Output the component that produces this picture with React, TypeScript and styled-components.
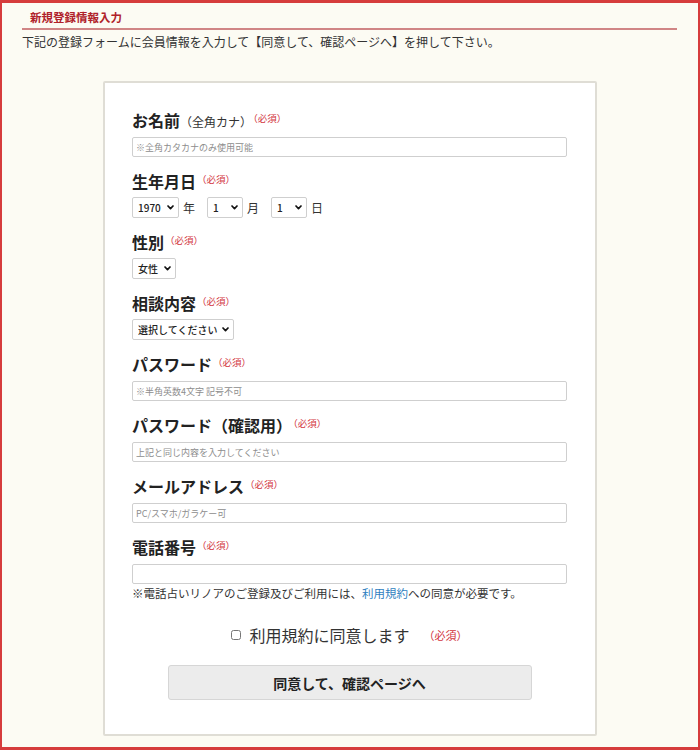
import React from "react";
import styled, { createGlobalStyle } from "styled-components";

const Global = createGlobalStyle`
  html, body { margin: 0; padding: 0; }
  body { font-family: "Noto Sans CJK JP", "Noto Sans", sans-serif; color: #333; }
  * { box-sizing: border-box; }
`;

const Page = styled.div`
  width: 700px;
  height: 750px;
  border: 2px solid #d63c3c;
  border-top-width: 3px;
  border-bottom-width: 3px;
  background: #fcfbf3;
  display: flex;
  flex-direction: column;
  overflow: hidden;
`;

const Header = styled.div`
  margin: 0 21px 0 20px;
`;

const Title = styled.h1`
  margin: 0;
  padding: 6px 8px 3px;
  font-size: 11.5px;
  line-height: 16px;
  font-weight: 700;
  color: #b0222a;
  border-bottom: 2px solid #d08585;
`;

const Intro = styled.p`
  margin: 3px 0 0;
  font-size: 12px;
  line-height: 18px;
  color: #333;
`;

const Card = styled.div`
  align-self: center;
  width: 494px;
  margin-top: 30px;
  background: #fff;
  border: 2px solid #dfddd5;
  border-radius: 2px;
  padding: 28px 28px 34px 27px;
  display: flex;
  flex-direction: column;
`;

const FieldGroup = styled.div<{ $last?: boolean; $select?: boolean }>`
  display: flex;
  flex-direction: column;
  gap: ${(p) => (p.$select ? "3px" : "4px")};
  margin-bottom: ${(p) => (p.$last ? "0" : "15px")};
`;

const Label = styled.div`
  height: 22px;
  padding-bottom: 4px;
  font-size: 16px;
  line-height: 18px;
  font-weight: 700;
  color: #222;
  white-space: nowrap;
`;

const Sub = styled.span`
  font-size: 12px;
  font-weight: 400;
  color: #333;
`;

const Req = styled.span`
  font-size: 9.5px;
  line-height: 0;
  font-weight: 400;
  color: #d2343c;
  vertical-align: 5px;
  margin-left: 1px;
`;

const TextInput = styled.input`
  display: block;
  width: 100%;
  height: 20px;
  border: 1px solid #cfcfcf;
  border-radius: 2px;
  padding: 0 3px;
  font-family: "Noto Sans CJK JP", sans-serif;
  font-size: 9px;
  color: #333;
  background: #fff;
  outline: none;
  &::placeholder { color: #8d8d8d; }
`;

const Row = styled.div`
  display: flex;
  align-items: center;
  height: 21px;
`;

const SelectWrap = styled.span`
  position: relative;
  display: inline-flex;
`;

const Select = styled.select<{ $w: number }>`
  appearance: none;
  -webkit-appearance: none;
  width: ${(p) => p.$w}px;
  height: 21px;
  border: 1px solid #cfcfcf;
  border-radius: 2px;
  background: #fff;
  font-family: "Noto Sans CJK JP", sans-serif;
  font-size: 10px;
  font-weight: 500;
  color: #222;
  padding: 0 14px 0 5px;
  outline: none;
`;

const Chevron = styled.svg`
  position: absolute;
  right: 5px;
  top: 8px;
  width: 7px;
  height: 5px;
  pointer-events: none;
`;

const Unit = styled.span`
  font-size: 12px;
  color: #333;
  margin: 0 12px 0 4px;
`;

const Note = styled.p`
  margin: 1px 0 0;
  font-size: 11.5px;
  line-height: 16px;
  color: #333;
  white-space: nowrap;
`;

const Link = styled.a`
  color: #2f7fbf;
  text-decoration: none;
`;

const AgreeRow = styled.label`
  margin-top: 22px;
  display: flex;
  align-items: center;
  justify-content: center;
  height: 24px;
  font-size: 16px;
  color: #333;
`;

const Check = styled.input`
  width: 10px;
  height: 10px;
  margin: 0 8px 0 0;
`;

const AgreeReq = styled.span`
  font-size: 11px;
  color: #d2343c;
  margin-left: 14px;
`;

const Submit = styled.button`
  margin: 18px auto 0;
  width: 364px;
  height: 35px;
  background: #ececec;
  border: 1px solid #d6d6d6;
  border-radius: 3px;
  font-family: "Noto Sans CJK JP", sans-serif;
  font-size: 14px;
  font-weight: 700;
  color: #222;
`;

function Dropdown({ w, value, options }: { w: number; value: string; options: string[] }) {
  return (
    <SelectWrap>
      <Select $w={w} defaultValue={value}>
        {options.map((o) => (
          <option key={o}>{o}</option>
        ))}
      </Select>
      <Chevron viewBox="0 0 7 5">
        <path d="M1 1 L3.5 3.6 L6 1" fill="none" stroke="#111" strokeWidth="1.7" strokeLinecap="round" strokeLinejoin="round" />
      </Chevron>
    </SelectWrap>
  );
}

export default function App() {
  return (
    <>
      <Global />
      <Page>
        <Header>
          <Title>新規登録情報入力</Title>
        </Header>
        <Header>
          <Intro>下記の登録フォームに会員情報を入力して【同意して、確認ページへ】を押して下さい。</Intro>
        </Header>
        <Card>
          <FieldGroup>
            <Label>
              お名前<Sub>（全角カナ）</Sub>
              <Req>（必須）</Req>
            </Label>
            <TextInput placeholder="※全角カタカナのみ使用可能" />
          </FieldGroup>
          <FieldGroup $select>
            <Label>
              生年月日<Req>（必須）</Req>
            </Label>
            <Row>
              <Dropdown w={47} value="1970" options={["1970"]} />
              <Unit>年</Unit>
              <Dropdown w={36} value="1" options={["1"]} />
              <Unit>月</Unit>
              <Dropdown w={36} value="1" options={["1"]} />
              <Unit>日</Unit>
            </Row>
          </FieldGroup>
          <FieldGroup $select>
            <Label>
              性別<Req>（必須）</Req>
            </Label>
            <Row>
              <Dropdown w={44} value="女性" options={["女性", "男性"]} />
            </Row>
          </FieldGroup>
          <FieldGroup $select>
            <Label>
              相談内容<Req>（必須）</Req>
            </Label>
            <Row>
              <Dropdown w={102} value="選択してください" options={["選択してください"]} />
            </Row>
          </FieldGroup>
          <FieldGroup>
            <Label>
              パスワード<Req>（必須）</Req>
            </Label>
            <TextInput placeholder="※半角英数4文字 記号不可" />
          </FieldGroup>
          <FieldGroup>
            <Label>
              パスワード（確認用）<Req>（必須）</Req>
            </Label>
            <TextInput placeholder="上記と同じ内容を入力してください" />
          </FieldGroup>
          <FieldGroup>
            <Label>
              メールアドレス<Req>（必須）</Req>
            </Label>
            <TextInput placeholder="PC/スマホ/ガラケー可" />
          </FieldGroup>
          <FieldGroup $last>
            <Label>
              電話番号<Req>（必須）</Req>
            </Label>
            <TextInput />
          </FieldGroup>
          <Note>
            ※電話占いリノアのご登録及びご利用には、<Link href="#">利用規約</Link>への同意が必要です。
          </Note>
          <AgreeRow>
            <Check type="checkbox" />
            利用規約に同意します
            <AgreeReq>（必須）</AgreeReq>
          </AgreeRow>
          <Submit type="button">同意して、確認ページへ</Submit>
        </Card>
      </Page>
    </>
  );
}
